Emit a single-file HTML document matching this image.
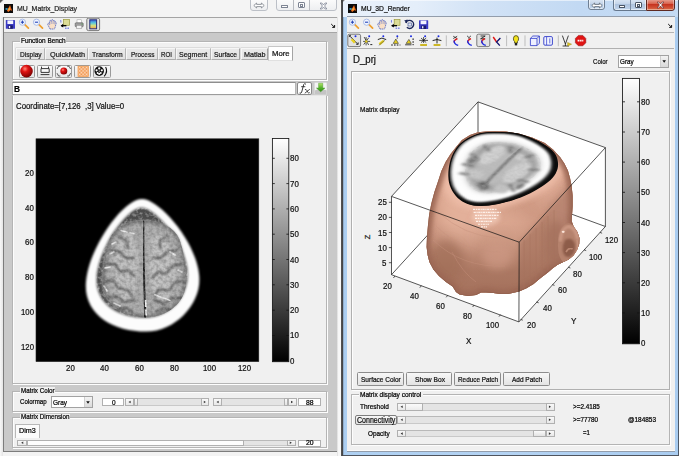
<!DOCTYPE html>
<html>
<head>
<meta charset="utf-8">
<title>MU</title>
<style>
*{box-sizing:border-box;margin:0;padding:0}
html,body{width:679px;height:456px;overflow:hidden;background:#f1f1f1}
body{position:relative;font-family:"Liberation Sans",sans-serif;color:#000;font-size:8px;line-height:1}
.a{position:absolute}
.t{position:absolute;white-space:nowrap;line-height:1;display:block;-webkit-text-stroke:0.22px currentColor}
#lw{left:0;top:0;width:341px;height:456px;background:linear-gradient(90deg,#f8f8f8,#e4e4e4 3px,#f3f3f3 3.2px);overflow:hidden}
#rw{left:341px;top:0;width:338px;height:456px;overflow:hidden}
.pn{position:absolute;background:#f0f0f0;border:1px solid #b4b4b4;box-shadow:inset 1px 1px 0 #fdfdfd,1px 1px 0 #fdfdfd}
.lb{position:absolute;background:#f0f0f0}
.tab{position:absolute;top:48px;height:12px;background:linear-gradient(#e9e9e9,#e2e2e2);border:1px solid #f6f6f6;border-right-color:#a2a2a2;border-bottom-color:#adadad;box-shadow:-0.5px -0.5px 0 #c9c9c9}
.ed{position:absolute;background:#fff;border:1px solid #a9a9a9}
.btn{position:absolute;background:linear-gradient(#f7f7f7,#e3e3e3);border:1px solid #8c8c8c;border-radius:1.5px}
.sl{position:absolute;background:#e4e4e4;border-top:1px solid #b9b9b9;border-bottom:1px solid #c9c9c9}
.sb{position:absolute;background:linear-gradient(#f9f9f9,#e8e8e8);border:1px solid #b0b0b0}
</style>
</head>
<body>
<div id="lw" class="a">
<div class="a" style="left:0;top:0;width:341px;height:17px;background:#f4f4f4"></div>
<div class="a" style="left:0;top:0;width:4px;height:3px;background:linear-gradient(135deg,#555 30%,#f4f4f4 60%)"></div>
<svg class="a" style="left:3.9px;top:3.8px" width="9.2" height="9" viewBox="0 0 10 10" preserveAspectRatio="none"><rect width="10" height="10" fill="#0a0a0a"/><path d="M0.6 5.6 L3.2 4.4 L4.6 5.6 L3.4 6.8 Z" fill="#3aa9d8"/><path d="M3.2 7.6 L5.4 3.4 L6.6 1.2 L7.6 4.2 L9.2 8.2 L7.6 6.6 L6.2 7.6 L4.8 9.0 Z" fill="#e8641a"/><path d="M6.6 1.2 L7.6 4.2 L9.2 8.2 L8.0 5.2Z" fill="#8c2a12"/><path d="M4.4 6.2 L6.0 3.2 L6.6 5.8 L5.4 7.8Z" fill="#f6b23a"/></svg>
<span class="t" id="tx0" style="left:17.20px;top:4px;font-size:7.80px;line-height:9px;color:#1c1c1c;transform-origin:0 0;transform:scaleX(0.8877)">MU_Matrix_Display</span>
<div class="a" style="left:250px;top:-2px;width:17.5px;height:12.5px;border:1px solid #bcc0c7;border-radius:0 0 3px 3px;background:linear-gradient(#fcfcfc,#eeeff1)"></div>
<svg class="a" style="left:253px;top:1.5px" width="12" height="7" viewBox="0 0 12 7"><path d="M0.8 3.5 L3.6 1 L3.6 2.4 L8.4 2.4 L8.4 1 L11.2 3.5 L8.4 6 L8.4 4.6 L3.6 4.6 L3.6 6 Z" fill="#fff" stroke="#7a7f88" stroke-width="0.8"/></svg>
<div class="a" style="left:275.5px;top:-2px;width:61px;height:13px;border:1px solid #bcc0c7;border-radius:0 0 3px 3px;background:linear-gradient(#fcfcfc,#eeeff1)"></div>
<div class="a" style="left:292.5px;top:0;width:1px;height:10.5px;background:#b7bac0"></div>
<div class="a" style="left:309px;top:0;width:1px;height:10.5px;background:#b7bac0"></div>
<div class="a" style="left:281px;top:5px;width:6.5px;height:3px;border:1px solid #7d8493;background:#fdfdfd;border-radius:.5px"></div>
<div class="a" style="left:297.5px;top:2px;width:7px;height:6px;border:1px solid #7d8493;background:#fdfdfd;border-radius:1px"></div>
<div class="a" style="left:299.5px;top:4px;width:3.5px;height:2.5px;border:.8px solid #7d8493;background:#fdfdfd"></div>
<svg class="a" style="left:319px;top:1.5px" width="9" height="8" viewBox="0 0 9 8"><path d="M1.2 1 L2.8 1 L4.5 3 L6.2 1 L7.8 1 L5.6 4 L7.8 7 L6.2 7 L4.5 5 L2.8 7 L1.2 7 L3.4 4 Z" fill="#fff" stroke="#7a8090" stroke-width="0.8"/></svg>
<div class="a" style="left:2.8px;top:16.6px;width:335.2px;height:435.8px;background:#7c7c7c"></div>
<div class="a" style="left:3.8px;top:17px;width:334.2px;height:1px;background:#a4a4a4"></div><div class="a" style="left:3.8px;top:17.6px;width:334.2px;height:14.4px;background:#f0f0f0"></div>
<div class="a" style="left:3.8px;top:32px;width:334.2px;height:1px;background:#a6a6a6"></div>
<div class="a" style="left:3.8px;top:33px;width:333.2px;height:418.4px;background:#c9c9c9"></div><div class="a" style="left:337px;top:17px;width:4px;height:439px;background:linear-gradient(90deg,#d9d9d9,#f6f6f6 1.4px,#f8f8f8)"></div>

<svg class="a" style="left:4px;top:18px" width="333" height="14" viewBox="4 18 333 14">
<g transform="translate(5.8,20)"><rect x="0" y="0" width="9.2" height="8.8" rx="0.6" fill="#3c3cc4"/><rect x="1.6" y="0.4" width="5.8" height="3.6" fill="#f4f4ff"/><rect x="2.2" y="5.4" width="4.8" height="3.4" fill="#1a1a6a"/><rect x="3" y="6" width="1.4" height="2.2" fill="#e8e8ff"/></g>
<line x1="24.599999999999998" y1="24.4" x2="28.4" y2="28.2" stroke="#eda030" stroke-width="1.7" stroke-linecap="round"/><circle cx="22.4" cy="22.2" r="3.1" fill="#f1f6ff" stroke="#a3b6e4" stroke-width="0.9"/><line x1="20.799999999999997" y1="22.2" x2="24.0" y2="22.2" stroke="#2343b8" stroke-width="1.1"/><line x1="22.4" y1="20.599999999999998" x2="22.4" y2="23.8" stroke="#2343b8" stroke-width="1.1"/>
<line x1="38.7" y1="24.4" x2="42.5" y2="28.2" stroke="#eda030" stroke-width="1.7" stroke-linecap="round"/><circle cx="36.5" cy="22.2" r="3.1" fill="#f1f6ff" stroke="#a3b6e4" stroke-width="0.9"/><line x1="34.9" y1="22.2" x2="38.1" y2="22.2" stroke="#2343b8" stroke-width="1.1"/>
<g transform="translate(47,19.4)"><path d="M3.0 9.6 Q1.8 7.4 0.9 5.4 Q0.3 4.0 1.2 3.9 Q2.0 3.9 2.6 5.0 L2.5 2.0 Q2.6 0.9 3.4 1.0 Q4.1 1.1 4.2 2.0 L4.4 1.0 Q4.6 0.1 5.4 0.2 Q6.1 0.3 6.1 1.2 L6.3 1.6 Q6.6 0.8 7.3 1.0 Q7.9 1.2 7.8 2.2 L7.9 2.9 Q8.3 2.3 8.9 2.6 Q9.4 2.9 9.2 3.8 L8.4 6.8 Q8.0 8.4 7.4 9.6 Z" fill="#fae0c6" stroke="#3f58c0" stroke-width="0.75" stroke-linejoin="round" stroke-dasharray="1.4 0.5"/><path d="M4.2 2.0 V4.6 M6.1 1.4 V4.6 M7.8 2.6 V5" stroke="#5a70c8" stroke-width="0.5"/></g>
<g transform="translate(60,19.6)"><rect x="3.6" y="-0.1" width="5.8" height="5.8" fill="#dcdc98" stroke="#9a9a3c" stroke-width="0.7"/><path d="M1.2 6.1 H6.4" stroke="#000" stroke-width="1.3"/><path d="M0.6 6.1 L3.2 4.2 V8 Z" fill="#000"/><path d="M0.3 1.2 L0.9 0.8 V3" stroke="#2a3ad8" stroke-width="0.6" fill="none"/><path d="M5 8.6 H9.6" stroke="#2a3ad8" stroke-width="0.8" stroke-dasharray="1.6 0.8"/></g>
<g transform="translate(75,19.8)"><rect x="2" y="0" width="4.6" height="3.4" fill="#fff" stroke="#999" stroke-width="0.5"/><rect x="0.2" y="3" width="8" height="4" rx="0.8" fill="#9f9f9f" stroke="#555" stroke-width="0.6"/><rect x="1.6" y="5.6" width="5.2" height="3" fill="#f2f2f2" stroke="#888" stroke-width="0.5"/><circle cx="7" cy="4.2" r="0.5" fill="#3a3"/></g>
<rect x="86.8" y="18.2" width="12.8" height="12.4" rx="1.6" fill="#e3e3e3" stroke="#6e6e6e" stroke-width="0.9"/>
<defs><linearGradient id="jet" x1="0" y1="0" x2="0" y2="1"><stop offset="0" stop-color="#3a5ad8"/><stop offset="0.35" stop-color="#58c8e0"/><stop offset="0.65" stop-color="#d8e078"/><stop offset="1" stop-color="#f0a050"/></linearGradient></defs>
<rect x="89.8" y="19.8" width="6.8" height="9" fill="url(#jet)" stroke="#2a2f7a" stroke-width="1"/>
<path d="M331.2 24 L334.4 27.2 M334.6 25 L334.6 27.4 L332.2 27.4" stroke="#111" stroke-width="1" fill="none"/>
</svg>
<div class="pn" style="left:12px;top:41px;width:315px;height:39px"></div>
<div class="lb" style="left:19.5px;top:37px;width:46.5px;height:8px"></div>
<span class="t" id="tx1" style="left:20.60px;top:37px;font-size:6.90px;line-height:7px;transform-origin:0 0;transform:scaleX(0.9313)">Function Bench</span>
<div class="tab" style="left:16px;width:29.0px"></div>
<span class="t" id="tx2" style="left:20.00px;top:50px;font-size:7.50px;line-height:9px;color:#1a1a1a;transform-origin:0 0;transform:scaleX(0.8783)">Display</span>
<div class="tab" style="left:45.4px;width:42.4px"></div>
<span class="t" id="tx3" style="left:49.60px;top:50px;font-size:7.50px;line-height:9px;color:#1a1a1a;transform-origin:0 0;transform:scaleX(0.9760)">QuickMath</span>
<div class="tab" style="left:88px;width:38.0px"></div>
<span class="t" id="tx4" style="left:92.00px;top:50px;font-size:7.50px;line-height:9px;color:#1a1a1a;transform-origin:0 0;transform:scaleX(0.9084)">Transform</span>
<div class="tab" style="left:126.4px;width:31.2px"></div>
<span class="t" id="tx5" style="left:130.60px;top:50px;font-size:7.50px;line-height:9px;color:#1a1a1a;transform-origin:0 0;transform:scaleX(0.8637)">Process</span>
<div class="tab" style="left:158px;width:17.6px"></div>
<span class="t" id="tx6" style="left:161.40px;top:50px;font-size:7.50px;line-height:9px;color:#1a1a1a;transform-origin:0 0;transform:scaleX(0.8244)">ROI</span>
<div class="tab" style="left:176px;width:34.6px"></div>
<span class="t" id="tx7" style="left:179.40px;top:50px;font-size:7.50px;line-height:9px;color:#1a1a1a;transform-origin:0 0;transform:scaleX(0.9390)">Segment</span>
<div class="tab" style="left:211px;width:29.4px"></div>
<span class="t" id="tx8" style="left:214.40px;top:50px;font-size:7.50px;line-height:9px;color:#1a1a1a;transform-origin:0 0;transform:scaleX(0.8894)">Surface</span>
<div class="tab" style="left:240.8px;width:27.0px"></div>
<span class="t" id="tx9" style="left:244.20px;top:50px;font-size:7.50px;line-height:9px;color:#1a1a1a;transform-origin:0 0;transform:scaleX(0.9593)">Matlab</span>
<div class="tab" style="left:268px;top:46px;width:24.8px;height:15px;background:#fff;border:1px solid #c6c6c6;border-right-color:#a4a4a4;border-bottom:1px solid #e0e0e0;box-shadow:none"></div>
<span class="t" id="tx10" style="left:271.80px;top:49px;font-size:7.60px;line-height:9px;color:#111;transform-origin:0 0;transform:scaleX(1.0166)">More</span>
<div class="btn" style="left:18.6px;top:64.8px;width:16.2px;height:12.8px;border-color:#9a9a9a;background:linear-gradient(#f9f9f9,#e6e6e6)"></div>
<div class="btn" style="left:36.9px;top:64.8px;width:16.2px;height:12.8px;border-color:#9a9a9a;background:linear-gradient(#f9f9f9,#e6e6e6)"></div>
<div class="btn" style="left:55.2px;top:64.8px;width:16.8px;height:12.8px;border-color:#9a9a9a;background:linear-gradient(#f9f9f9,#e6e6e6)"></div>
<div class="btn" style="left:74.0px;top:64.8px;width:16.7px;height:12.8px;border-color:#9a9a9a;background:linear-gradient(#f9f9f9,#e6e6e6)"></div>
<div class="btn" style="left:92.7px;top:64.8px;width:17.9px;height:12.8px;border-color:#9a9a9a;background:linear-gradient(#f9f9f9,#e6e6e6)"></div>
<svg class="a" style="left:16px;top:63px" width="100" height="17" viewBox="16 63 100 17"><defs><radialGradient id="rb" cx="0.38" cy="0.32" r="0.7"><stop offset="0" stop-color="#ff8a7a"/><stop offset="0.35" stop-color="#e01212"/><stop offset="1" stop-color="#7a0000"/></radialGradient><pattern id="dots" width="1.4" height="1.4" patternUnits="userSpaceOnUse"><rect width="1.4" height="1.4" fill="#fde1c6"/><rect width="0.7" height="0.7" fill="#f08a3c"/><rect x="0.7" y="0.7" width="0.7" height="0.7" fill="#f08a3c"/></pattern></defs>
<circle cx="26.5" cy="71.1" r="6.3" fill="url(#rb)"/>
<path d="M41.5 68.4 V66.6 M48.5 68.4 V66.6 M41 68.6 H49.2 V72.4 H41 Z M40.6 74.6 H49.4" stroke="#222" stroke-width="0.9" fill="#fafafa"/>
<circle cx="63.8" cy="71.1" r="3.5" fill="url(#rb)"/><path d="M60.4 66.2 H58.6 L57 69 M60.4 76 H58.6 L57 73.2 M67.2 66.2 H69 L70.6 69 M67.2 76 H69 L70.6 73.2" stroke="#333" stroke-width="0.8" fill="none"/>
<rect x="78" y="66.2" width="10.4" height="10.2" fill="url(#dots)" stroke="#f29a4c" stroke-width="0.7"/>
<circle cx="99.2" cy="71.1" r="4.8" fill="#111"/><circle cx="99.2" cy="68.4" r="1.15" fill="#fff"/><circle cx="99.2" cy="73.8" r="1.15" fill="#fff"/><circle cx="96.6" cy="70.3" r="1.1" fill="#fff"/><circle cx="101.8" cy="70.3" r="1.1" fill="#fff"/><circle cx="97.6" cy="73" r="0.9" fill="#fff"/><circle cx="100.8" cy="73" r="0.9" fill="#fff"/><circle cx="99.2" cy="71.1" r="0.6" fill="#fff"/><path d="M105.6 67 Q108.2 71.4 104.2 76.4" stroke="#111" stroke-width="1.1" fill="none"/>
</svg>
<div class="ed" style="left:12px;top:82.4px;width:284px;height:12.6px;border-color:#b5b5b5;border-top-color:#8e8e8e;border-bottom-color:#9c9c9c"></div>
<span class="t" id="tx11" style="left:14.40px;top:84px;font-size:8.80px;line-height:10px;font-weight:bold;transform-origin:0 0;transform:scaleX(0.9435)">B</span>
<div class="btn" style="left:297.4px;top:82.4px;width:14.6px;height:12.4px;background:#fff;border-color:#8a8a8a;border-radius:2px"></div>
<svg class="a" style="left:297px;top:82px" width="16" height="13" viewBox="297 82 16 13"><g fill="none" stroke="#141414" stroke-linecap="round"><path d="M305.6 84 Q304.5 82.8 303.7 84.6 L301.7 92 Q301.1 93.9 299.9 93.2" stroke-width="0.85"/><path d="M301.5 86.7 H304.9" stroke-width="0.75"/><path d="M305.3 89.5 Q306.3 89.1 306.7 90.2 L307.9 92.5 Q308.4 93.4 309.4 92.8 M309.5 89.5 L305.1 93" stroke-width="0.75"/></g></svg>
<svg class="a" style="left:313.6px;top:82px" width="13.4" height="13" viewBox="0 0 13.4 13"><defs><linearGradient id="garr" x1="0" y1="0" x2="0" y2="1"><stop offset="0" stop-color="#b4e66a"/><stop offset="0.55" stop-color="#52b02a"/><stop offset="1" stop-color="#2f8a14"/></linearGradient></defs><rect x="0.4" y="0.4" width="12.6" height="12.2" rx="1.2" fill="#f4f4f4" stroke="#d4d4d4" stroke-width="0.6"/><path d="M0.8 8.6 L3.4 7.4 L10 7.4 L12.6 8.6 L12.6 12.4 L0.8 12.4 Z" fill="#c4c4c4"/><path d="M4.6 1.2 H8.8 V6 H11 L6.7 9.8 L2.4 6 H4.6 Z" fill="url(#garr)" stroke="#3d8f1f" stroke-width="0.4"/></svg>
<div class="pn" style="left:12px;top:95px;width:315px;height:288.6px;border-color:#b4b4b4;border-top-color:#e6e6e6;box-shadow:inset 1px 0 0 #fdfdfd,1px 1px 0 #fdfdfd"></div>
<span class="t" id="tx12" style="left:16.40px;top:101px;font-size:8.50px;line-height:10px;color:#111;transform-origin:0 0;transform:scaleX(0.9207)">Coordinate=[7,126&nbsp;&nbsp;,3] Value=0</span>
<svg class="a" style="left:30px;top:134px" width="270" height="236" viewBox="30 134 270 236">
<defs>
<filter id="bl1" x="-10%" y="-10%" width="120%" height="120%"><feGaussianBlur stdDeviation="1"/></filter>
<filter id="bl2" x="-20%" y="-20%" width="140%" height="140%"><feGaussianBlur stdDeviation="1.8"/></filter>
<filter id="bl3" x="-20%" y="-20%" width="140%" height="140%"><feGaussianBlur stdDeviation="3"/></filter>
<filter id="bl07" x="-10%" y="-10%" width="120%" height="120%"><feGaussianBlur stdDeviation="0.8"/></filter>
<filter id="bl05" x="-10%" y="-10%" width="120%" height="120%"><feGaussianBlur stdDeviation="0.55"/></filter>
<filter id="noiseL" x="0" y="0" width="100%" height="100%"><feTurbulence type="fractalNoise" baseFrequency="0.33" numOctaves="2" seed="11"/><feColorMatrix values="0 0 0 0 0.5  0 0 0 0 0.5  0 0 0 0 0.5  1.9 0 0 0 -0.62"/></filter>
<filter id="noiseD" x="0" y="0" width="100%" height="100%"><feTurbulence type="fractalNoise" baseFrequency="0.3" numOctaves="2" seed="3"/><feColorMatrix values="0 0 0 0 0.1  0 0 0 0 0.1  0 0 0 0 0.1  0 1.9 0 0 -0.7"/></filter>
<filter id="noiseW" x="0" y="0" width="100%" height="100%"><feTurbulence type="fractalNoise" baseFrequency="0.3" numOctaves="2" seed="5"/><feColorMatrix values="0 0 0 0 0.95  0 0 0 0 0.95  0 0 0 0 0.95  0 0 2.2 0 -0.95"/></filter>
<linearGradient id="gcb" x1="0" y1="1" x2="0" y2="0"><stop offset="0" stop-color="#000"/><stop offset="1" stop-color="#fff"/></linearGradient>
<clipPath id="brainclip"><path d="M143.5 220.6 C160 220.6 174 227 179.4 239 C184.4 253 186.4 268 186 283 C185.4 302 168 317.4 145.5 317.4 C122 317.4 102.4 302 102.4 283 C102.4 268 104.6 253 109.6 239 C115 227 128 220.6 143.5 220.6 Z"/></clipPath>
<clipPath id="eggclip"><path d="M142 199 C160 199 199.4 245 199.4 280 C199.4 305 175 331.6 146 331.6 C114 331.6 85.8 316 85.8 286 C85.8 252 122 199 142 199 Z"/></clipPath>
<clipPath id="skullclip"><path d="M 141.6 207.2 C 156.2 207.2 188.2 245.6 188.2 274.9 C 188.2 295.8 168.4 318.0 144.9 318.0 C 118.9 318.0 96.0 305.0 96.0 279.9 C 96.0 251.5 125.4 207.2 141.6 207.2 Z"/></clipPath>
</defs>
<rect x="36.0" y="138.8" width="222.8" height="222.8" fill="#000"/>
<g filter="url(#bl1)">
<path d="M142 199 C160 199 199.4 245 199.4 280 C199.4 305 175 331.6 146 331.6 C114 331.6 85.8 316 85.8 286 C85.8 252 122 199 142 199 Z" fill="#fcfcfc"/>
<path d="M 141.6 207.2 C 156.2 207.2 188.2 245.6 188.2 274.9 C 188.2 295.8 168.4 318.0 144.9 318.0 C 118.9 318.0 96.0 305.0 96.0 279.9 C 96.0 251.5 125.4 207.2 141.6 207.2 Z" fill="#4c4c4c"/>
</g>
<g clip-path="url(#eggclip)">
<g clip-path="url(#skullclip)"><rect x="90" y="200" width="110" height="130" filter="url(#noiseW)" opacity="0.5"/></g>
<path d="M143.5 220.6 C160 220.6 174 227 179.4 239 C184.4 253 186.4 268 186 283 C185.4 302 168 317.4 145.5 317.4 C122 317.4 102.4 302 102.4 283 C102.4 268 104.6 253 109.6 239 C115 227 128 220.6 143.5 220.6 Z" fill="#acacac" filter="url(#bl1)"/>
</g>
<g clip-path="url(#brainclip)">
<path d="M143.5 220.6 C160 220.6 174 227 179.4 239 C184.4 253 186.4 268 186 283 C185.4 302 168 317.4 145.5 317.4 C122 317.4 102.4 302 102.4 283 C102.4 268 104.6 253 109.6 239 C115 227 128 220.6 143.5 220.6 Z" fill="none" stroke="#6a6a6a" stroke-width="6" filter="url(#bl2)" opacity="0.75"/>
<g filter="url(#bl2)"><path d="M128 232 C136 236 139 252 138 270 C137 288 134 298 126 302 C116 298 112 286 113 270 C114 252 120 236 128 232 Z" fill="#c2c2c2"/><path d="M158 232 C150 236 148 252 149 270 C150 288 154 298 163 302 C172 298 176 286 175 270 C174 252 166 236 158 232 Z" fill="#c4c4c4"/></g>
<g stroke="#484848" stroke-width="1.9" fill="none" filter="url(#bl07)" stroke-linecap="round" stroke-linejoin="round">
<path d="M118 236 L126 240 L128 248 M110 250 L120 252 L126 258 L134 258 M106 264 L115 264 L120 272 L128 270 L134 276 M104 282 L113 280 L118 288 L128 290 L132 296 M108 298 L117 296 L124 302 L134 300 M116 310 L126 308 L133 312"/>
<path d="M168 236 L160 240 L160 248 M177 250 L167 252 L161 258 L152 258 M182 264 L172 266 L166 274 L158 272 L152 278 M184 282 L175 282 L170 290 L158 290 L155 296 M182 298 L172 298 L164 304 L154 300 M174 310 L164 308 L156 312"/>
</g>
<g stroke="#f0f0f0" stroke-width="1.5" fill="none" filter="url(#bl05)" stroke-linecap="round">
<path d="M121 230.6 L127 232 M130 232.6 L134 233.4 M105 268 L110 267 M110 254 L114 252 M154.7 294.7 L170 300.4 M170 252 L175 255 M178 270 L182 272 M114 303 L120 306 M104 286 L107 291 M112 244 L116 242"/>
</g>
<path d="M143.4 214 L143.4 250 L144.4 290 L145.2 318" stroke="#141414" stroke-width="2" fill="none" filter="url(#bl05)"/>
<path d="M145.2 300 L145.8 307 M146.2 309.5 L146.6 315.5" stroke="#f6f6f6" stroke-width="2.4" fill="none" filter="url(#bl05)"/>
<rect x="90" y="200" width="110" height="130" filter="url(#noiseL)" opacity="0.5"/>
<rect x="90" y="200" width="110" height="130" filter="url(#noiseD)" opacity="0.45"/>
</g>
<path d="M143.4 209 L143.4 226" stroke="#2c2c2c" stroke-width="2.6" fill="none" filter="url(#bl1)"/>
<rect x="36.0" y="138.8" width="222.8" height="222.8" fill="none" stroke="#222" stroke-width="0.6"/>
<rect x="272.4" y="138.5" width="16.4" height="223.20000000000002" fill="url(#gcb)" stroke="#161616" stroke-width="0.85"/>
<path d="M286.4 335.5 H288.8 M272.4 335.5 H274.8" stroke="#111" stroke-width="0.8"/>
<path d="M286.4 310.2 H288.8 M272.4 310.2 H274.8" stroke="#111" stroke-width="0.8"/>
<path d="M286.4 284.8 H288.8 M272.4 284.8 H274.8" stroke="#111" stroke-width="0.8"/>
<path d="M286.4 259.5 H288.8 M272.4 259.5 H274.8" stroke="#111" stroke-width="0.8"/>
<path d="M286.4 234.2 H288.8 M272.4 234.2 H274.8" stroke="#111" stroke-width="0.8"/>
<path d="M286.4 208.9 H288.8 M272.4 208.9 H274.8" stroke="#111" stroke-width="0.8"/>
<path d="M286.4 183.6 H288.8 M272.4 183.6 H274.8" stroke="#111" stroke-width="0.8"/>
<path d="M286.4 158.3 H288.8 M272.4 158.3 H274.8" stroke="#111" stroke-width="0.8"/>
</svg>
<span class="t" id="tx13" style="left:65.54px;top:363px;font-size:8.40px;line-height:10px;color:#111;transform-origin:0 0;transform:scaleX(0.9434)">20</span>
<span class="t" id="tx14" style="left:25.00px;top:168px;font-size:8.40px;line-height:10px;color:#111;transform-origin:0 0;transform:scaleX(0.9434)">20</span>
<span class="t" id="tx15" style="left:100.35px;top:363px;font-size:8.40px;line-height:10px;color:#111;transform-origin:0 0;transform:scaleX(0.9434)">40</span>
<span class="t" id="tx16" style="left:25.00px;top:203px;font-size:8.40px;line-height:10px;color:#111;transform-origin:0 0;transform:scaleX(0.9434)">40</span>
<span class="t" id="tx17" style="left:135.17px;top:363px;font-size:8.40px;line-height:10px;color:#111;transform-origin:0 0;transform:scaleX(0.9434)">60</span>
<span class="t" id="tx18" style="left:25.00px;top:237px;font-size:8.40px;line-height:10px;color:#111;transform-origin:0 0;transform:scaleX(0.9434)">60</span>
<span class="t" id="tx19" style="left:169.98px;top:363px;font-size:8.40px;line-height:10px;color:#111;transform-origin:0 0;transform:scaleX(0.9434)">80</span>
<span class="t" id="tx20" style="left:25.00px;top:272px;font-size:8.40px;line-height:10px;color:#111;transform-origin:0 0;transform:scaleX(0.9434)">80</span>
<span class="t" id="tx21" style="left:202.69px;top:363px;font-size:8.40px;line-height:10px;color:#111;transform-origin:0 0;transform:scaleX(0.9296)">100</span>
<span class="t" id="tx22" style="left:20.80px;top:307px;font-size:8.40px;line-height:10px;color:#111;transform-origin:0 0;transform:scaleX(0.9296)">100</span>
<span class="t" id="tx23" style="left:237.50px;top:363px;font-size:8.40px;line-height:10px;color:#111;transform-origin:0 0;transform:scaleX(0.9296)">120</span>
<span class="t" id="tx24" style="left:20.80px;top:342px;font-size:8.40px;line-height:10px;color:#111;transform-origin:0 0;transform:scaleX(0.9296)">120</span>
<span class="t" id="tx25" style="left:289.80px;top:356px;font-size:8.40px;line-height:10px;color:#111;transform-origin:0 0;transform:scaleX(0.9418)">0</span>
<span class="t" id="tx26" style="left:289.80px;top:330px;font-size:8.40px;line-height:10px;color:#111;transform-origin:0 0;transform:scaleX(0.9434)">10</span>
<span class="t" id="tx27" style="left:289.80px;top:305px;font-size:8.40px;line-height:10px;color:#111;transform-origin:0 0;transform:scaleX(0.9434)">20</span>
<span class="t" id="tx28" style="left:289.80px;top:280px;font-size:8.40px;line-height:10px;color:#111;transform-origin:0 0;transform:scaleX(0.9434)">30</span>
<span class="t" id="tx29" style="left:289.80px;top:255px;font-size:8.40px;line-height:10px;color:#111;transform-origin:0 0;transform:scaleX(0.9434)">40</span>
<span class="t" id="tx30" style="left:289.80px;top:229px;font-size:8.40px;line-height:10px;color:#111;transform-origin:0 0;transform:scaleX(0.9434)">50</span>
<span class="t" id="tx31" style="left:289.80px;top:204px;font-size:8.40px;line-height:10px;color:#111;transform-origin:0 0;transform:scaleX(0.9434)">60</span>
<span class="t" id="tx32" style="left:289.80px;top:179px;font-size:8.40px;line-height:10px;color:#111;transform-origin:0 0;transform:scaleX(0.9434)">70</span>
<span class="t" id="tx33" style="left:289.80px;top:153px;font-size:8.40px;line-height:10px;color:#111;transform-origin:0 0;transform:scaleX(0.9434)">80</span>
<div class="pn" style="left:12px;top:391px;width:315px;height:20.6px"></div>
<div class="lb" style="left:19.6px;top:387px;width:35.6px;height:8px"></div>
<span class="t" id="tx34" style="left:20.60px;top:387px;font-size:6.90px;line-height:7px;transform-origin:0 0;transform:scaleX(0.9047)">Matrix Color</span>
<span class="t" id="tx35" style="left:20.00px;top:397px;font-size:7.20px;line-height:9px;transform-origin:0 0;transform:scaleX(0.8533)">Colormap</span>
<div class="ed" style="left:51.4px;top:395.6px;width:41.2px;height:12.8px;border-color:#a2a2a2"></div>
<span class="t" id="tx36" style="left:53.40px;top:398px;font-size:7.40px;line-height:9px;transform-origin:0 0;transform:scaleX(0.8741)">Gray</span>
<div class="a" style="left:84px;top:396.6px;width:7.6px;height:10.8px;background:linear-gradient(#f3f3f3,#dadada);border-left:1px solid #cfcfcf"></div>
<svg class="a" style="left:84px;top:396.6px" width="8" height="11" viewBox="0 0 8 11"><polygon points="2.2,4.32 5.8,4.32 4,6.840000000000001" fill="#111"/></svg>
<div class="ed" style="left:102px;top:398.4px;width:22.2px;height:7.4px;border-color:#b0b0b0"></div>
<span class="t" id="tx37" style="left:111.60px;top:399px;font-size:6.60px;line-height:7px;transform-origin:0 0;transform:scaleX(0.9804)">0</span>
<div class="sl" style="left:125px;top:397.6px;width:84.4px;height:8px"></div><div class="sb" style="left:125px;top:397.6px;width:8.6px;height:8px"></div><div class="sb" style="left:200.8px;top:397.6px;width:8.6px;height:8px"></div><div class="sb" style="left:134.4px;top:397.6px;width:3.6px;height:8px;background:linear-gradient(#fafafa,#e2e2e2)"></div><svg class="a" style="left:125px;top:397.6px" width="84.4" height="8" viewBox="0 0 84.4 8"><polygon points="5.6,2.7 3.5199999999999996,4.0 5.6,5.3" fill="#333"/><polygon points="78.80000000000001,2.7 80.88000000000001,4.0 78.80000000000001,5.3" fill="#333"/></svg>
<div class="sl" style="left:213px;top:397.6px;width:83.6px;height:8px"></div><div class="sb" style="left:213px;top:397.6px;width:8.6px;height:8px"></div><div class="sb" style="left:288.0px;top:397.6px;width:8.6px;height:8px"></div><div class="sb" style="left:284.2px;top:397.6px;width:3.4px;height:8px;background:linear-gradient(#fafafa,#e2e2e2)"></div><svg class="a" style="left:213px;top:397.6px" width="83.6" height="8" viewBox="0 0 83.6 8"><polygon points="5.6,2.7 3.5199999999999996,4.0 5.6,5.3" fill="#333"/><polygon points="78.0,2.7 80.08,4.0 78.0,5.3" fill="#333"/></svg>
<div class="ed" style="left:298px;top:398.2px;width:23px;height:7.6px;border-color:#b0b0b0"></div>
<span class="t" id="tx38" style="left:305.60px;top:399px;font-size:6.60px;line-height:7px;transform-origin:0 0;transform:scaleX(1.0349)">88</span>
<div class="pn" style="left:12px;top:417px;width:315px;height:31px"></div>
<div class="lb" style="left:19.6px;top:413.6px;width:50.6px;height:8px"></div>
<span class="t" id="tx39" style="left:20.80px;top:413px;font-size:6.90px;line-height:7px;transform-origin:0 0;transform:scaleX(0.9092)">Matrix Dimension</span>
<div class="a" style="left:15.4px;top:424.4px;width:24.2px;height:14px;background:#fbfbfb;border:1px solid #b8b8b8;border-bottom:none"></div>
<span class="t" id="tx40" style="left:19.40px;top:426px;font-size:7.40px;line-height:9px;transform-origin:0 0;transform:scaleX(0.9739)">Dim3</span>
<div class="sl" style="left:17.4px;top:440px;width:279px;height:5.6px"></div><div class="sb" style="left:17.4px;top:440px;width:9.6px;height:5.6px"></div><div class="sb" style="left:286.8px;top:440px;width:9.6px;height:5.6px"></div><div class="sb" style="left:27.4px;top:440px;width:217px;height:5.6px;background:#fdfdfd"></div><svg class="a" style="left:17.4px;top:440px" width="279" height="5.6" viewBox="0 0 279 5.6"><polygon points="6.1,1.4999999999999998 4.02,2.8 6.1,4.1" fill="#333"/><polygon points="272.9,1.4999999999999998 274.97999999999996,2.8 272.9,4.1" fill="#333"/></svg>
<div class="ed" style="left:298px;top:440px;width:23px;height:6.6px;border-color:#b0b0b0"></div>
<span class="t" id="tx41" style="left:305.60px;top:439px;font-size:6.40px;line-height:7px;transform-origin:0 0;transform:scaleX(1.0690)">20</span>
</div>
<div id="rw" class="a">
<div class="a" style="left:-341px;top:0;width:679px;height:456px">
<div class="a" style="left:341px;top:0;width:338px;height:456px;background:linear-gradient(90deg,#6a6a6a 0,#3e3e3e 0.9px,#4a4c50 1.9px,#9fc0e2 2.6px,#aacdf1 3.2px,#aed0f2 6px,#b4d3f3 50%,#a9ccf0 100%)"></div>
<div class="a" style="left:343px;top:0;width:336px;height:17px;background:linear-gradient(90deg,#e9f1fb 0,#e4eefa 22%,#d3e3f6 40%,#c2d9f3 70%,#c4dbf4 100%)"></div>
<div class="a" style="left:343px;top:0;width:336px;height:1px;background:rgba(255,255,255,.55)"></div>
<div class="a" style="left:677.8px;top:0;width:1.2px;height:456px;background:#4d5866"></div>
<div class="a" style="left:342.6px;top:454.8px;width:336.4px;height:1.2px;background:#50555e"></div>
<div class="a" style="left:341px;top:0;width:4px;height:3px;background:linear-gradient(135deg,#444 35%,rgba(0,0,0,0) 65%)"></div>
<div class="a" style="left:346.6px;top:16.4px;width:328.6px;height:435.4px;background:#939dab"></div>
<div class="a" style="left:347.4px;top:17.2px;width:327.4px;height:433.8px;background:#f0f0f0"></div>
<div class="a" style="left:347.4px;top:450px;width:327.4px;height:1px;background:#fbfbfb"></div>
<svg class="a" style="left:347.6px;top:3.8px" width="9.2" height="9" viewBox="0 0 10 10" preserveAspectRatio="none"><rect width="10" height="10" fill="#0a0a0a"/><path d="M0.6 5.6 L3.2 4.4 L4.6 5.6 L3.4 6.8 Z" fill="#3aa9d8"/><path d="M3.2 7.6 L5.4 3.4 L6.6 1.2 L7.6 4.2 L9.2 8.2 L7.6 6.6 L6.2 7.6 L4.8 9.0 Z" fill="#e8641a"/><path d="M6.6 1.2 L7.6 4.2 L9.2 8.2 L8.0 5.2Z" fill="#8c2a12"/><path d="M4.4 6.2 L6.0 3.2 L6.6 5.8 L5.4 7.8Z" fill="#f6b23a"/></svg>
<span class="t" id="tx42" style="left:360.60px;top:4px;font-size:7.80px;line-height:9px;color:#0c0c0c;transform-origin:0 0;transform:scaleX(0.8661)">MU_3D_Render</span>
<div class="a" style="left:588.4px;top:-2px;width:17px;height:12.4px;border:1px solid #6f7f92;border-radius:0 0 3px 3px;background:linear-gradient(#dfe9f5 0,#c6d6ea 45%,#b1c6e0 50%,#c4d6ec 100%);box-shadow:inset 0 0 0 .8px rgba(255,255,255,.7)"></div>
<svg class="a" style="left:591px;top:1.5px" width="12" height="7" viewBox="0 0 12 7"><path d="M0.8 3.5 L3.6 1 L3.6 2.4 L8.4 2.4 L8.4 1 L11.2 3.5 L8.4 6 L8.4 4.6 L3.6 4.6 L3.6 6 Z" fill="#fff" stroke="#5a6470" stroke-width="0.8"/></svg>
<div class="a" style="left:613px;top:-2px;width:33.4px;height:13.2px;border:1px solid #66778c;border-right:none;border-radius:0 0 0 3px;background:linear-gradient(#dde8f5 0,#c4d5ea 45%,#aec3de 50%,#c2d5ec 100%);box-shadow:inset 0 0 0 .8px rgba(255,255,255,.7)"></div>
<div class="a" style="left:629.6px;top:0;width:1px;height:10.4px;background:#7b8ca3"></div>
<div class="a" style="left:646px;top:-2px;width:29.4px;height:13.2px;border:1px solid #5e2a22;border-radius:0 0 3px 0;background:linear-gradient(#e9a99c 0,#d8604a 45%,#c63420 50%,#d4573a 85%,#e08a60 100%);box-shadow:inset 0 0 0 .8px rgba(255,255,255,.45)"></div>
<div class="a" style="left:618.6px;top:5px;width:6.5px;height:3px;border:1px solid #4b5666;background:#fdfdfd;border-radius:.5px"></div>
<div class="a" style="left:634.8px;top:2px;width:7px;height:6px;border:1px solid #4b5666;background:#fdfdfd;border-radius:1px"></div>
<div class="a" style="left:636.8px;top:4px;width:3.5px;height:2.5px;border:.8px solid #4b5666;background:#d9e3f0"></div>
<svg class="a" style="left:656.4px;top:1.4px" width="9" height="8" viewBox="0 0 9 8"><path d="M1.2 1 L2.8 1 L4.5 3 L6.2 1 L7.8 1 L5.6 4 L7.8 7 L6.2 7 L4.5 5 L2.8 7 L1.2 7 L3.4 4 Z" fill="#fff" stroke="#6a3030" stroke-width="0.7"/></svg>
<div class="a" style="left:347.4px;top:31.8px;width:326.6px;height:1px;background:#b4b4b4"></div>
<div class="a" style="left:347.4px;top:48.4px;width:326.6px;height:1px;background:#b0b0b0"></div>
<svg class="a" style="left:347px;top:17px" width="327" height="32" viewBox="347 17 327 32">
<line x1="354.59999999999997" y1="24.4" x2="358.4" y2="28.2" stroke="#eda030" stroke-width="1.7" stroke-linecap="round"/><circle cx="352.4" cy="22.2" r="3.1" fill="#f1f6ff" stroke="#a3b6e4" stroke-width="0.9"/><line x1="350.79999999999995" y1="22.2" x2="354.0" y2="22.2" stroke="#2343b8" stroke-width="1.1"/><line x1="352.4" y1="20.599999999999998" x2="352.4" y2="23.8" stroke="#2343b8" stroke-width="1.1"/>
<line x1="368.8" y1="24.4" x2="372.6" y2="28.2" stroke="#eda030" stroke-width="1.7" stroke-linecap="round"/><circle cx="366.6" cy="22.2" r="3.1" fill="#f1f6ff" stroke="#a3b6e4" stroke-width="0.9"/><line x1="365.0" y1="22.2" x2="368.20000000000005" y2="22.2" stroke="#2343b8" stroke-width="1.1"/>
<g transform="translate(377,19.4)"><path d="M3.0 9.6 Q1.8 7.4 0.9 5.4 Q0.3 4.0 1.2 3.9 Q2.0 3.9 2.6 5.0 L2.5 2.0 Q2.6 0.9 3.4 1.0 Q4.1 1.1 4.2 2.0 L4.4 1.0 Q4.6 0.1 5.4 0.2 Q6.1 0.3 6.1 1.2 L6.3 1.6 Q6.6 0.8 7.3 1.0 Q7.9 1.2 7.8 2.2 L7.9 2.9 Q8.3 2.3 8.9 2.6 Q9.4 2.9 9.2 3.8 L8.4 6.8 Q8.0 8.4 7.4 9.6 Z" fill="#fae0c6" stroke="#3f58c0" stroke-width="0.75" stroke-linejoin="round" stroke-dasharray="1.4 0.5"/><path d="M4.2 2.0 V4.6 M6.1 1.4 V4.6 M7.8 2.6 V5" stroke="#5a70c8" stroke-width="0.5"/></g>
<g transform="translate(390.6,19.6)"><rect x="3.6" y="-0.1" width="5.8" height="5.8" fill="#dcdc98" stroke="#9a9a3c" stroke-width="0.7"/><path d="M1.2 6.1 H6.4" stroke="#000" stroke-width="1.3"/><path d="M0.6 6.1 L3.2 4.2 V8 Z" fill="#000"/><path d="M0.3 1.2 L0.9 0.8 V3" stroke="#2a3ad8" stroke-width="0.6" fill="none"/><path d="M5 8.6 H9.6" stroke="#2a3ad8" stroke-width="0.8" stroke-dasharray="1.6 0.8"/></g>
<circle cx="409.6" cy="24.4" r="4" fill="none" stroke="#1a2458" stroke-width="1.5" stroke-dasharray="20 5.2" transform="rotate(200 409.6 24.4)"/><polygon points="404.2,20.4 407.6,19.4 406.6,23" fill="#1a2458"/><rect x="408" y="23" width="3.4" height="3" fill="#dfe6f4" stroke="#3a4a8a" stroke-width="0.6"/>
<g transform="translate(419,20.2)"><rect x="0" y="0" width="9.2" height="8.8" rx="0.6" fill="#3c3cc4"/><rect x="1.6" y="0.4" width="5.8" height="3.6" fill="#f4f4ff"/><rect x="2.2" y="5.4" width="4.8" height="3.4" fill="#1a1a6a"/><rect x="3" y="6" width="1.4" height="2.2" fill="#e8e8ff"/></g>
<path d="M668.2 24 L671.4 27.2 M671.6 25 L671.6 27.4 L669.2 27.4" stroke="#111" stroke-width="1" fill="none"/>
<rect x="347.8" y="34.2" width="12.8" height="12.4" rx="1.6" fill="#e2e2e2" stroke="#6e6e6e" stroke-width="0.9"/>
<circle cx="355.5" cy="36.2" r="1" fill="#1a2ae0"/><path d="M350 36.2 L357.6 44" stroke="#111" stroke-width="0.9"/><path d="M351.6 39.2 L354.8 42.6" stroke="#e8d020" stroke-width="2.4"/><path d="M356.2 44.4 h2 v-2" stroke="#111" stroke-width="0.8" fill="none"/><path d="M349.4 35.4 h1.6 M349.4 35.4 v1.6" stroke="#111" stroke-width="0.8"/>
<circle cx="369.2" cy="36.2" r="1" fill="#1a2ae0"/><path d="M364.09999999999997 37 L368.7 45 M363.09999999999997 41.4 H370.09999999999997 M366.09999999999997 37 V45.4 M368.7 37.8 L363.7 44.6" stroke="#111" stroke-width="0.7"/><circle cx="366.3" cy="41.4" r="1.2" fill="#e8d020"/><path d="M370.3 44.6 h2" stroke="#111" stroke-width="0.9"/>
<circle cx="383.3" cy="36.2" r="1" fill="#1a2ae0"/><path d="M377.8 39.6 Q381.8 36.6 386.2 39.6" stroke="#111" stroke-width="0.9" fill="none"/><path d="M379.40000000000003 44.2 L383.8 40.6" stroke="#e8d020" stroke-width="2.4"/><path d="M378.8 45.4 L384.8 40.2" stroke="#444" stroke-width="0.6"/>
<circle cx="397.3" cy="36.2" r="1" fill="#1a2ae0"/><path d="M393.2 43.4 L395.8 39 L398.40000000000003 43.4 Z" fill="#e8d020" stroke="#333" stroke-width="0.6"/><path d="M391.2 45 H400.40000000000003" stroke="#111" stroke-width="1" stroke-dasharray="1.6 1.2"/><path d="M397.3 37.4 v1.4" stroke="#111" stroke-width="0.6"/>
<circle cx="411.0" cy="36.2" r="1" fill="#1a2ae0"/><path d="M406.1 43.4 L408.9 39.4 L411.3 43.4 Z" fill="#e8d020" stroke="#333" stroke-width="0.6"/><path d="M413.1 38.4 V45.2" stroke="#111" stroke-width="1" stroke-dasharray="1.6 1.2"/><path d="M405.1 44.8 H411.5" stroke="#111" stroke-width="0.8"/>
<circle cx="425.1" cy="36.2" r="1" fill="#1a2ae0"/><path d="M419.20000000000005 40.4 H428.0 M423.6 37 V43 M421.0 38 L426.20000000000005 42.6 M426.20000000000005 38 L421.0 42.6" stroke="#111" stroke-width="0.7"/><path d="M420.20000000000005 45 H427.0" stroke="#c8b010" stroke-width="1.8"/>
<circle cx="438.5" cy="36.2" r="1" fill="#1a2ae0"/><path d="M432.6 40.6 Q437 38.4 441.4 40.6 M437 37.6 V43.4" stroke="#111" stroke-width="0.9" fill="none"/><path d="M433.6 45 H440.4" stroke="#c8b010" stroke-width="1.8"/>
<path d="M446.3 35.4 V46.2 M506.6 35.4 V46.2 M525 35.4 V46.2 M558.3 35.4 V46.2" stroke="#bdbdbd" stroke-width="1"/>
<rect x="476.8" y="34.2" width="13" height="12.4" rx="1.6" fill="#e2e2e2" stroke="#6e6e6e" stroke-width="0.9"/>
<path d="M453.20000000000005 36.2 L457.20000000000005 38.6 M457.20000000000005 36.2 L453.20000000000005 38.6" stroke="#111" stroke-width="0.7"/><path d="M457.40000000000003 38.6 Q453.0 40.6 454.6 43" stroke="#e01818" stroke-width="1.3" fill="none"/><path d="M454.0 40.4 Q454.0 44 458.20000000000005 45.4" stroke="#1a2ae0" stroke-width="1.3" fill="none"/>
<path d="M467.0 35.8 L469.0 37.6 L471.0 35.8 M469.0 37.6 V39" stroke="#111" stroke-width="0.7" fill="none"/><path d="M471.0 38.6 Q466.59999999999997 40.6 468.2 43" stroke="#e01818" stroke-width="1.3" fill="none"/><path d="M467.59999999999997 40.4 Q467.59999999999997 44 471.8 45.4" stroke="#1a2ae0" stroke-width="1.3" fill="none"/>
<path d="M480.59999999999997 36 H485.2 L480.59999999999997 38.8 H485.2" stroke="#111" stroke-width="0.8" fill="none"/><path d="M485.0 38.6 Q480.59999999999997 40.6 482.2 43" stroke="#e01818" stroke-width="1.3" fill="none"/><path d="M481.59999999999997 40.4 Q481.59999999999997 44 485.8 45.4" stroke="#1a2ae0" stroke-width="1.3" fill="none"/>
<path d="M493.2 37 L496.6 42" stroke="#e01818" stroke-width="1.4"/><path d="M500.4 38 L496.6 42 L499.8 45.6" stroke="#10106a" stroke-width="1.3" fill="none"/>
<path d="M513.4 38.8 Q513.4 35.6 516 35.6 Q518.6 35.6 518.6 38.8 Q518.6 40.6 517.4 41.6 V43 H514.6 V41.6 Q513.4 40.6 513.4 38.8 Z" fill="#f2e21c" stroke="#2a2a10" stroke-width="0.7"/><rect x="514.8" y="43" width="2.4" height="2.4" fill="#222"/>
<path d="M530.4 38.4 H537 V45.6 H530.4 Z M530.4 38.4 L532.8 36 H539.4 L537 38.4 M539.4 36 V43.2 L537 45.6" fill="#eef0ff" stroke="#2a36c8" stroke-width="0.8"/>
<rect x="543.8" y="36.6" width="8.6" height="8.6" rx="1.2" fill="#f2f4ff" stroke="#2a36c8" stroke-width="0.9"/><path d="M546.6 36.8 V45 M549.8 38.4 V43.4" stroke="#2a36c8" stroke-width="0.7"/>
<path d="M562.4 35.6 L565.4 44 L568.4 35.6 M565.4 44 V46 M562.6 46 H569" stroke="#111" stroke-width="0.8" fill="none"/><path d="M567.6 42.4 L571.6 44.2 L567.6 46 Z" fill="#e2c81c" stroke="#8a7a10" stroke-width="0.4"/>
<polygon points="578.4,35.4 582.8,35.4 585.8,38.4 585.8,42.8 582.8,45.8 578.4,45.8 575.4,42.8 575.4,38.4" fill="#e01414" stroke="#8a0808" stroke-width="0.5"/><path d="M577.6 40.6 H583.6" stroke="#fff" stroke-width="1.8" stroke-dasharray="1.4 0.5"/>
</svg>
<span class="t" id="tx43" style="left:353.40px;top:54px;font-size:10.00px;line-height:11px;color:#111;transform-origin:0 0;transform:scaleX(0.9621)">D_prj</span>
<span class="t" id="tx44" style="left:592.80px;top:58px;font-size:6.90px;line-height:7px;color:#111;transform-origin:0 0;transform:scaleX(0.8865)">Color</span>
<div class="ed" style="left:618px;top:55.4px;width:51.4px;height:12.6px;border-color:#a2a2a2"></div>
<span class="t" id="tx45" style="left:620.40px;top:57px;font-size:7.20px;line-height:9px;transform-origin:0 0;transform:scaleX(0.8730)">Gray</span>
<div class="a" style="left:660.4px;top:56.4px;width:8px;height:10.6px;background:linear-gradient(#f3f3f3,#d8d8d8);border-left:1px solid #cfcfcf"></div>
<svg class="a" style="left:660.4px;top:56.4px" width="8" height="11" viewBox="0 0 8 11"><polygon points="2.4000000000000004,4.32 6.0,4.32 4.2,6.840000000000001" fill="#111"/></svg>
<div class="pn" style="left:351.4px;top:71px;width:319px;height:318.6px;border-color:#b0b0b0"></div>
<span class="t" id="tx46" style="left:360.00px;top:106px;font-size:6.90px;line-height:7px;color:#111;transform-origin:0 0;transform:scaleX(0.9401)">Matrix display</span>
<svg class="a" style="left:352px;top:72px" width="317" height="300" viewBox="352 72 317 300">
<defs>
<filter id="rb05" x="-10%" y="-10%" width="120%" height="120%"><feGaussianBlur stdDeviation="0.5"/></filter>
<filter id="rb15" x="-10%" y="-10%" width="120%" height="120%"><feGaussianBlur stdDeviation="1.7"/></filter>
<filter id="rb1" x="-10%" y="-10%" width="120%" height="120%"><feGaussianBlur stdDeviation="1"/></filter>
<filter id="rb2" x="-20%" y="-20%" width="140%" height="140%"><feGaussianBlur stdDeviation="2.2"/></filter>
<filter id="rb4" x="-20%" y="-20%" width="140%" height="140%"><feGaussianBlur stdDeviation="4.5"/></filter>
<filter id="rb7" x="-30%" y="-30%" width="160%" height="160%"><feGaussianBlur stdDeviation="8"/></filter>
<filter id="noiseS" x="0" y="0" width="100%" height="100%"><feTurbulence type="fractalNoise" baseFrequency="0.22" numOctaves="2" seed="4"/><feColorMatrix values="0 0 0 0 0.45  0 0 0 0 0.45  0 0 0 0 0.45  1.8 0 0 0 -0.6"/></filter>
<linearGradient id="lowdark" x1="0" y1="0" x2="0" y2="1"><stop offset="0" stop-color="#a87560" stop-opacity="0"/><stop offset="0.3" stop-color="#a87560" stop-opacity="0.35"/><stop offset="0.62" stop-color="#a6735e" stop-opacity="0.88"/><stop offset="1" stop-color="#a06d58" stop-opacity="0.95"/></linearGradient>
<linearGradient id="gcb2" x1="0" y1="1" x2="0" y2="0"><stop offset="0" stop-color="#000"/><stop offset="1" stop-color="#fff"/></linearGradient>
<clipPath id="headclip"><path d="M478 132.2 L470 135 L462 140 L456.7 146.3 L450.6 154 L445.7 161.7 L441.4 171 L438 181.4 L434.4 192 L431.4 203.3 L429.2 214 L428 225 L427 236 L426.6 247 L427.6 255 L429.4 262 L433.4 269.6 L439 276 L446 282 L452.6 286.6 L456 292 L459.6 294.6 L468 296 L476 295 L481 292.6 L486 292.4 L493.3 293 L500 294 L508 294 L519 291.6 L526.4 288.2 L533.5 284 L540 278.6 L547.8 272.4 L553 268 L558 264.6 L563.4 262 L568.6 259.6 L573.4 255.6 L577 250 L579.2 244 L579.4 238 L577.4 232 L573.6 226.4 L571.6 221 L572.6 206 L572.6 196 L571.6 185.8 L570 178 L567.9 170.4 L564.4 163.4 L560.2 157.3 L553 149.4 L544.8 143 L532 137.4 L518.5 133.4 L506 131.6 L495 131.2 L486 131.4 Z"/></clipPath>
<clipPath id="g1clip"><path d="M-41.3 37.7 C-38.6 33.0 -33.9 29.2 -29.6 25.8 C-25.2 22.4 -20.1 19.2 -15.2 17.4 C-10.3 15.7 -4.8 15.5 -0.1 15.3 C4.6 15.1 9.0 15.4 13.1 16.2 C17.3 17.1 21.2 18.2 24.7 20.4 C28.2 22.6 31.8 26.3 34.3 29.6 C36.8 32.8 38.6 36.1 39.9 40.1 C41.2 44.2 41.9 48.6 42.0 53.7 C42.1 58.7 41.4 64.7 40.3 70.4 C39.2 76.2 37.3 82.8 35.2 88.2 C33.1 93.6 30.5 98.5 27.6 102.8 C24.7 107.2 21.0 111.7 17.8 114.3 C14.6 116.9 11.8 118.0 8.4 118.6 C5.0 119.1 1.2 118.8 -2.8 117.5 C-6.7 116.2 -11.3 113.8 -15.3 110.8 C-19.2 107.8 -23.0 104.0 -26.5 99.6 C-30.1 95.2 -34.0 89.4 -36.7 84.3 C-39.5 79.2 -41.8 74.1 -43.3 69.1 C-44.7 64.0 -45.7 59.3 -45.4 54.0 C-45.1 48.8 -43.9 42.4 -41.3 37.7 Z"/></clipPath>
<clipPath id="sliceclip"><path d="M-54.0 28.4 C-50.6 22.2 -44.4 17.1 -38.6 12.7 C-32.9 8.2 -26.2 4.0 -19.7 1.7 C-13.3 -0.6 -6.1 -0.9 0.2 -1.2 C6.4 -1.4 12.2 -1.0 17.6 0.1 C23.1 1.2 28.2 2.7 32.8 5.6 C37.5 8.5 42.2 13.3 45.5 17.7 C48.9 22.0 51.2 26.3 52.9 31.6 C54.6 36.9 55.6 42.8 55.6 49.5 C55.7 56.1 54.9 63.9 53.4 71.5 C51.9 79.1 49.5 87.8 46.7 94.9 C43.9 102.0 40.6 108.5 36.7 114.2 C32.9 119.9 28.0 125.8 23.8 129.3 C19.5 132.8 15.9 134.2 11.4 135.0 C6.9 135.7 1.9 135.3 -3.3 133.6 C-8.5 131.9 -14.6 128.7 -19.8 124.7 C-25.0 120.8 -29.9 115.8 -34.6 110.0 C-39.3 104.2 -44.4 96.5 -48.1 89.8 C-51.8 83.1 -54.8 76.4 -56.7 69.7 C-58.6 63.1 -59.9 56.8 -59.5 49.9 C-59.1 43.0 -57.5 34.6 -54.0 28.4 Z"/></clipPath>
</defs>
<polygon points="391.5,196.4 478.0,101.9 605.4,147.6 605.4,226.5 518.9,321.9 391.5,274.7" fill="#fff"/>
<g stroke="#151515" stroke-width="0.72" fill="none">
<path d="M391.5 196.4 L478.0 101.9 L605.4 147.6 L605.4 226.5 M478.0 101.9 L478.0 179.9 M391.5 274.7 L478.0 179.9 L605.4 226.5"/>
<path d="M391.5 196.4 L391.5 274.7 L518.9 321.9 L605.4 226.5"/>
</g>
<path d="M478 132.2 L470 135 L462 140 L456.7 146.3 L450.6 154 L445.7 161.7 L441.4 171 L438 181.4 L434.4 192 L431.4 203.3 L429.2 214 L428 225 L427 236 L426.6 247 L427.6 255 L429.4 262 L433.4 269.6 L439 276 L446 282 L452.6 286.6 L456 292 L459.6 294.6 L468 296 L476 295 L481 292.6 L486 292.4 L493.3 293 L500 294 L508 294 L519 291.6 L526.4 288.2 L533.5 284 L540 278.6 L547.8 272.4 L553 268 L558 264.6 L563.4 262 L568.6 259.6 L573.4 255.6 L577 250 L579.2 244 L579.4 238 L577.4 232 L573.6 226.4 L571.6 221 L572.6 206 L572.6 196 L571.6 185.8 L570 178 L567.9 170.4 L564.4 163.4 L560.2 157.3 L553 149.4 L544.8 143 L532 137.4 L518.5 133.4 L506 131.6 L495 131.2 L486 131.4 Z" fill="#cf9a84"/>
<g clip-path="url(#headclip)">
<ellipse cx="468" cy="200" rx="30" ry="52" fill="#e3b09a" filter="url(#rb7)"/>
<ellipse cx="505" cy="238" rx="26" ry="30" fill="#dba791" filter="url(#rb7)" opacity="0.9"/>
<ellipse cx="548" cy="175" rx="22" ry="28" fill="#deaa94" filter="url(#rb7)" opacity="0.9"/>
<g transform="matrix(0.699 0.352 -0.5388 0.43 533 141)"><path d="M-55.4 27.4 C-51.8 21.0 -45.5 15.9 -39.6 11.3 C-33.7 6.7 -26.8 2.4 -20.2 0.0 C-13.6 -2.4 -6.2 -2.6 0.2 -2.9 C6.6 -3.2 12.5 -2.8 18.1 -1.6 C23.7 -0.4 28.9 1.0 33.7 4.0 C38.5 7.0 43.3 11.9 46.7 16.4 C50.1 20.8 52.6 25.3 54.3 30.7 C56.0 36.1 57.0 42.2 57.1 49.0 C57.2 55.8 56.3 63.8 54.8 71.6 C53.3 79.4 50.8 88.3 47.9 95.6 C45.0 102.9 41.6 109.5 37.7 115.4 C33.8 121.3 28.7 127.4 24.4 130.9 C20.1 134.4 16.3 136.0 11.7 136.7 C7.1 137.4 1.9 137.1 -3.4 135.3 C-8.7 133.6 -14.9 130.2 -20.3 126.2 C-25.7 122.2 -30.7 117.1 -35.5 111.1 C-40.3 105.1 -45.5 97.3 -49.3 90.4 C-53.1 83.5 -56.1 76.6 -58.1 69.8 C-60.1 63.0 -61.5 56.6 -61.0 49.5 C-60.5 42.4 -59.0 33.8 -55.4 27.4 Z" fill="none" stroke="#eebda8" stroke-width="16" filter="url(#rb4)" opacity="0.9"/></g>
<path d="M519.4 243 L575 182 L590 262 L519.4 302 Z" fill="#b27f6b" filter="url(#rb2)" opacity="0.92"/>
<path d="M548 206 L575 176 L582 262 L548 282 Z" fill="#bb8874" filter="url(#rb4)" opacity="0.7"/>
<rect x="420" y="222" width="170" height="80" fill="url(#lowdark)"/>
<ellipse cx="446" cy="262" rx="18" ry="22" fill="#a06e59" filter="url(#rb4)" opacity="0.7"/>
<ellipse cx="497" cy="256" rx="15" ry="13" fill="#cd9984" filter="url(#rb4)" opacity="0.7"/>
<path d="M478 132.2 L470 135 L462 140 L456.7 146.3 L450.6 154 L445.7 161.7 L441.4 171 L438 181.4 L434.4 192 L431.4 203.3 L429.2 214 L428 225 L427 236 L426.6 247 L427.6 255 L429.4 262 L433.4 269.6 L439 276 L446 282 L452.6 286.6 L456 292 L459.6 294.6 L468 296 L476 295 L481 292.6 L486 292.4 L493.3 293 L500 294 L508 294 L519 291.6 L526.4 288.2 L533.5 284 L540 278.6 L547.8 272.4 L553 268 L558 264.6 L563.4 262 L568.6 259.6 L573.4 255.6 L577 250 L579.2 244 L579.4 238 L577.4 232 L573.6 226.4 L571.6 221 L572.6 206 L572.6 196 L571.6 185.8 L570 178 L567.9 170.4 L564.4 163.4 L560.2 157.3 L553 149.4 L544.8 143 L532 137.4 L518.5 133.4 L506 131.6 L495 131.2 L486 131.4 Z" fill="none" stroke="#9c6854" stroke-width="9" filter="url(#rb2)" opacity="0.9"/>
<path d="M478 132.2 L470 135 L462 140 L456.7 146.3 L450.6 154 L445.7 161.7 L441.4 171 L438 181.4 L434.4 192 L431.4 203.3 L429.2 214 L428 225 L427 236 L426.6 247 L427.6 255 L429.4 262 L433.4 269.6 L439 276 L446 282 L452.6 286.6 L456 292 L459.6 294.6 L468 296 L476 295 L481 292.6 L486 292.4 L493.3 293 L500 294 L508 294 L519 291.6 L526.4 288.2 L533.5 284 L540 278.6 L547.8 272.4 L553 268 L558 264.6 L563.4 262 L568.6 259.6 L573.4 255.6 L577 250 L579.2 244 L579.4 238 L577.4 232 L573.6 226.4 L571.6 221 L572.6 206 L572.6 196 L571.6 185.8 L570 178 L567.9 170.4 L564.4 163.4 L560.2 157.3 L553 149.4 L544.8 143 L532 137.4 L518.5 133.4 L506 131.6 L495 131.2 L486 131.4 Z" fill="none" stroke="#8e5e4c" stroke-width="1.6" filter="url(#rb05)" opacity="0.7"/>
<g fill="none" stroke="#c6927d" stroke-width="0.8" opacity="0.55" filter="url(#rb05)"><path d="M436 226 Q462 252 500 252 M433 240 Q462 268 505 266 M438 212 Q464 236 498 238 M452 252 Q462 272 476 282"/></g>
<ellipse cx="486" cy="217" rx="14" ry="9" fill="#f3cbb9" filter="url(#rb2)" opacity="0.7"/>
<g filter="url(#rb05)" stroke="#fff3ec" stroke-width="1.15" opacity="0.95" stroke-dasharray="2.2 0.7 1.2 0.6"><path d="M473 209.4 H497 M473.6 212.4 H501 M475 215.4 H499 M475 218.4 H497 M476 221.4 H492 M478 224.2 H489 M481 226.8 H487"/></g>
<ellipse cx="556" cy="244" rx="12" ry="24" fill="#a3705b" filter="url(#rb4)" opacity="0.75"/>
<path d="M560 232 Q563 222.6 570 223.4 Q577 226 579.4 238 Q580.4 248 576.6 255.6 Q572 262.4 563.4 262.6 Q557.4 256 558 244 Q558.4 237 560 232 Z" fill="#b5826d" filter="url(#rb05)"/>
<path d="M560.4 240 Q561 229 568.6 226.4 Q575.6 227.6 577.4 238" stroke="#cd9a85" stroke-width="3" fill="none" filter="url(#rb1)" stroke-linecap="round"/>
<path d="M565 240 Q572 236 575 244 Q576 253 570 257 Q563.6 258 562.6 250 Q562.6 244 565 240 Z" fill="#8d5c4a" filter="url(#rb1)"/>
<path d="M566 252 Q569 247 572.6 249" stroke="#b98671" stroke-width="1.6" fill="none" filter="url(#rb05)"/>
<path d="M577 240 Q579 248 575 256" stroke="#c4917c" stroke-width="1.6" fill="none" filter="url(#rb05)"/>
<ellipse cx="563.2" cy="231.8" rx="1.5" ry="1.1" fill="#fbe4d8" filter="url(#rb05)"/>
<g stroke="#a87561" stroke-width="0.9" opacity="0.55" filter="url(#rb05)"><path d="M524 240 V288 M530 234 V284 M536 228 V280 M542 222 V274 M548 216 V270 M554 210 V264"/></g>
</g>
<g transform="matrix(0.699 0.352 -0.5388 0.43 533 141)">
<path d="M-55.4 27.4 C-51.8 21.0 -45.5 15.9 -39.6 11.3 C-33.7 6.7 -26.8 2.4 -20.2 0.0 C-13.6 -2.4 -6.2 -2.6 0.2 -2.9 C6.6 -3.2 12.5 -2.8 18.1 -1.6 C23.7 -0.4 28.9 1.0 33.7 4.0 C38.5 7.0 43.3 11.9 46.7 16.4 C50.1 20.8 52.6 25.3 54.3 30.7 C56.0 36.1 57.0 42.2 57.1 49.0 C57.2 55.8 56.3 63.8 54.8 71.6 C53.3 79.4 50.8 88.3 47.9 95.6 C45.0 102.9 41.6 109.5 37.7 115.4 C33.8 121.3 28.7 127.4 24.4 130.9 C20.1 134.4 16.3 136.0 11.7 136.7 C7.1 137.4 1.9 137.1 -3.4 135.3 C-8.7 133.6 -14.9 130.2 -20.3 126.2 C-25.7 122.2 -30.7 117.1 -35.5 111.1 C-40.3 105.1 -45.5 97.3 -49.3 90.4 C-53.1 83.5 -56.1 76.6 -58.1 69.8 C-60.1 63.0 -61.5 56.6 -61.0 49.5 C-60.5 42.4 -59.0 33.8 -55.4 27.4 Z" fill="#0c0c0c"/>
<path d="M-55.4 27.4 C-51.8 21.0 -45.5 15.9 -39.6 11.3 C-33.7 6.7 -26.8 2.4 -20.2 0.0 C-13.6 -2.4 -6.2 -2.6 0.2 -2.9 C6.6 -3.2 12.5 -2.8 18.1 -1.6 C23.7 -0.4 28.9 1.0 33.7 4.0 C38.5 7.0 43.3 11.9 46.7 16.4 C50.1 20.8 52.6 25.3 54.3 30.7 C56.0 36.1 57.0 42.2 57.1 49.0 C57.2 55.8 56.3 63.8 54.8 71.6 C53.3 79.4 50.8 88.3 47.9 95.6 C45.0 102.9 41.6 109.5 37.7 115.4 C33.8 121.3 28.7 127.4 24.4 130.9 C20.1 134.4 16.3 136.0 11.7 136.7 C7.1 137.4 1.9 137.1 -3.4 135.3 C-8.7 133.6 -14.9 130.2 -20.3 126.2 C-25.7 122.2 -30.7 117.1 -35.5 111.1 C-40.3 105.1 -45.5 97.3 -49.3 90.4 C-53.1 83.5 -56.1 76.6 -58.1 69.8 C-60.1 63.0 -61.5 56.6 -61.0 49.5 C-60.5 42.4 -59.0 33.8 -55.4 27.4 Z" fill="#0c0c0c" transform="translate(1.2 -0.8)"/>
<g clip-path="url(#sliceclip)">
<path d="M-54.0 28.4 C-50.6 22.2 -44.4 17.1 -38.6 12.7 C-32.9 8.2 -26.2 4.0 -19.7 1.7 C-13.3 -0.6 -6.1 -0.9 0.2 -1.2 C6.4 -1.4 12.2 -1.0 17.6 0.1 C23.1 1.2 28.2 2.7 32.8 5.6 C37.5 8.5 42.2 13.3 45.5 17.7 C48.9 22.0 51.2 26.3 52.9 31.6 C54.6 36.9 55.6 42.8 55.6 49.5 C55.7 56.1 54.9 63.9 53.4 71.5 C51.9 79.1 49.5 87.8 46.7 94.9 C43.9 102.0 40.6 108.5 36.7 114.2 C32.9 119.9 28.0 125.8 23.8 129.3 C19.5 132.8 15.9 134.2 11.4 135.0 C6.9 135.7 1.9 135.3 -3.3 133.6 C-8.5 131.9 -14.6 128.7 -19.8 124.7 C-25.0 120.8 -29.9 115.8 -34.6 110.0 C-39.3 104.2 -44.4 96.5 -48.1 89.8 C-51.8 83.1 -54.8 76.4 -56.7 69.7 C-58.6 63.1 -59.9 56.8 -59.5 49.9 C-59.1 43.0 -57.5 34.6 -54.0 28.4 Z" fill="#0e0e0e"/>
<path d="M-51.3 30.4 C-48.0 24.5 -42.1 19.7 -36.7 15.5 C-31.3 11.3 -24.9 7.2 -18.8 5.0 C-12.6 2.8 -5.8 2.6 0.1 2.3 C6.0 2.1 11.5 2.5 16.7 3.5 C21.8 4.6 26.7 5.9 31.1 8.7 C35.5 11.5 39.9 16.1 43.1 20.2 C46.3 24.3 48.5 28.4 50.2 33.4 C51.8 38.4 52.7 44.0 52.7 50.3 C52.8 56.7 52.0 64.1 50.6 71.3 C49.2 78.4 46.9 86.7 44.2 93.5 C41.6 100.2 38.4 106.3 34.8 111.8 C31.2 117.2 26.5 122.8 22.5 126.1 C18.5 129.4 15.0 130.8 10.7 131.5 C6.5 132.2 1.7 131.8 -3.2 130.2 C-8.2 128.6 -13.9 125.5 -18.9 121.8 C-23.8 118.0 -28.4 113.3 -32.9 107.8 C-37.4 102.3 -42.2 95.0 -45.7 88.6 C-49.2 82.3 -52.0 75.9 -53.8 69.6 C-55.6 63.3 -56.9 57.3 -56.5 50.8 C-56.1 44.3 -54.6 36.3 -51.3 30.4 Z" fill="#fdfdfd" filter="url(#rb15)" transform="translate(-2.0 -0.8)"/>
<g transform="translate(-0.7 63.25) scale(0.944) translate(1 -67)">
<path d="M-39.1 39.3 C-36.6 34.8 -32.1 31.2 -28.0 28.0 C-23.9 24.8 -19.1 21.8 -14.4 20.1 C-9.8 18.4 -4.6 18.3 -0.2 18.1 C4.3 17.9 8.5 18.2 12.4 19.0 C16.3 19.8 20.0 20.8 23.3 22.9 C26.6 25.0 30.0 28.5 32.4 31.6 C34.8 34.7 36.5 37.8 37.7 41.6 C38.9 45.4 39.6 49.6 39.7 54.4 C39.7 59.2 39.1 64.8 38.1 70.2 C37.0 75.7 35.2 81.9 33.2 87.0 C31.2 92.1 28.8 96.8 26.1 100.9 C23.3 105.0 19.8 109.2 16.8 111.7 C13.7 114.2 11.1 115.3 7.9 115.8 C4.6 116.3 1.1 116.0 -2.7 114.8 C-6.4 113.6 -10.8 111.3 -14.5 108.4 C-18.3 105.6 -21.8 102.0 -25.1 97.9 C-28.5 93.7 -32.2 88.2 -34.8 83.4 C-37.4 78.6 -39.6 73.7 -41.0 69.0 C-42.3 64.2 -43.3 59.7 -43.0 54.8 C-42.7 49.8 -41.6 43.7 -39.1 39.3 Z" fill="#939393" filter="url(#rb4)"/>
<path d="M-31.5 44.8 C-29.5 41.3 -25.9 38.4 -22.6 35.8 C-19.3 33.3 -15.5 30.8 -11.8 29.5 C-8.0 28.2 -3.9 28.0 -0.3 27.9 C3.2 27.7 6.6 27.9 9.7 28.6 C12.8 29.2 15.8 30.0 18.4 31.7 C21.1 33.4 23.8 36.2 25.7 38.7 C27.6 41.2 29.0 43.6 30.0 46.7 C30.9 49.7 31.5 53.1 31.5 56.9 C31.6 60.7 31.1 65.2 30.2 69.6 C29.4 73.9 28.0 78.9 26.4 83.0 C24.8 87.1 22.9 90.8 20.7 94.1 C18.5 97.4 15.7 100.8 13.2 102.8 C10.8 104.8 8.7 105.6 6.1 106.0 C3.5 106.4 0.6 106.2 -2.3 105.2 C-5.3 104.3 -8.8 102.4 -11.8 100.2 C-14.8 97.9 -17.6 95.0 -20.3 91.7 C-23.0 88.4 -25.9 84.0 -28.0 80.1 C-30.2 76.2 -31.9 72.4 -33.0 68.6 C-34.1 64.8 -34.9 61.2 -34.6 57.2 C-34.3 53.2 -33.5 48.4 -31.5 44.8 Z" fill="#bcbcbc" filter="url(#rb4)"/>
<g filter="url(#rb2)"><ellipse cx="-22" cy="52" rx="10" ry="22" fill="#d2d2d2"/><ellipse cx="22" cy="60" rx="11" ry="24" fill="#d0d0d0"/><ellipse cx="-16" cy="94" rx="11" ry="9" fill="#c8c8c8"/><ellipse cx="26" cy="96" rx="9" ry="9" fill="#c4c4c4"/><ellipse cx="8" cy="34" rx="8" ry="6" fill="#cfcfcf"/></g>
<g filter="url(#rb2)" stroke="#707070" stroke-width="4" fill="none" stroke-linecap="round"><path d="M-40 44 L-30 48 M-42 66 L-30 70 M-38 88 L-28 84 M38 40 L30 46 M42 66 L32 70 M40 90 L30 84 M-14 26 L-8 34 M16 22 L12 30 M-30 104 L-22 100 M8 112 L12 104"/></g>
<g filter="url(#rb2)"><ellipse cx="4" cy="104" rx="7" ry="6" fill="#666"/><ellipse cx="-34" cy="76" rx="5" ry="7" fill="#7a7a7a"/><ellipse cx="40" cy="78" rx="4" ry="8" fill="#7c7c7c"/></g>
<path d="M-3 21 C-2 40 2 70 3 86 L7 108" stroke="#626262" stroke-width="3.2" fill="none" filter="url(#rb15)" stroke-linecap="round"/>
<g clip-path="url(#g1clip)"><rect x="-60" y="0" width="120" height="140" filter="url(#noiseS)" opacity="0.5"/></g>
</g>
</g></g>
<path d="M391.5 196.4 L519.2 242.2 L605.4 147.6 M519.2 242.2 L518.9 321.9" stroke="#151515" stroke-width="0.72" fill="none"/>
<g stroke="#151515" stroke-width="0.7">
<path d="M391.5 202.3 h-2.6"/>
<path d="M391.5 217.4 h-2.6"/>
<path d="M391.5 232.5 h-2.6"/>
<path d="M391.5 247.6 h-2.6"/>
<path d="M391.5 262.7 h-2.6"/>
<path d="M395.0 276.0 l-1.6 2"/>
<path d="M421.4 285.7 l-1.6 2"/>
<path d="M447.8 295.3 l-1.6 2"/>
<path d="M474.2 305.0 l-1.6 2"/>
<path d="M500.6 314.6 l-1.6 2"/>
<path d="M520.6 319.4 l2.2 0.8"/>
<path d="M536.5 302.0 l2.2 0.8"/>
<path d="M552.3 284.6 l2.2 0.8"/>
<path d="M568.2 267.2 l2.2 0.8"/>
<path d="M584.0 249.8 l2.2 0.8"/>
<path d="M599.9 232.4 l2.2 0.8"/>
</g>
<rect x="622.5" y="78.39999999999999" width="17" height="265.4" fill="url(#gcb2)" stroke="#161616" stroke-width="0.85"/>
<path d="M637 312.9 h2.5 M622.5 312.9 h2.5" stroke="#111" stroke-width="0.8"/>
<path d="M637 282.8 h2.5 M622.5 282.8 h2.5" stroke="#111" stroke-width="0.8"/>
<path d="M637 252.6 h2.5 M622.5 252.6 h2.5" stroke="#111" stroke-width="0.8"/>
<path d="M637 222.5 h2.5 M622.5 222.5 h2.5" stroke="#111" stroke-width="0.8"/>
<path d="M637 192.3 h2.5 M622.5 192.3 h2.5" stroke="#111" stroke-width="0.8"/>
<path d="M637 162.1 h2.5 M622.5 162.1 h2.5" stroke="#111" stroke-width="0.8"/>
<path d="M637 132.0 h2.5 M622.5 132.0 h2.5" stroke="#111" stroke-width="0.8"/>
<path d="M637 101.8 h2.5 M622.5 101.8 h2.5" stroke="#111" stroke-width="0.8"/>
</svg>
<span class="t" id="tx47" style="left:640.80px;top:338px;font-size:8.40px;line-height:10px;color:#111;transform-origin:0 0;transform:scaleX(0.9418)">0</span>
<span class="t" id="tx48" style="left:640.80px;top:308px;font-size:8.40px;line-height:10px;color:#111;transform-origin:0 0;transform:scaleX(0.9434)">10</span>
<span class="t" id="tx49" style="left:640.80px;top:278px;font-size:8.40px;line-height:10px;color:#111;transform-origin:0 0;transform:scaleX(0.9434)">20</span>
<span class="t" id="tx50" style="left:640.80px;top:248px;font-size:8.40px;line-height:10px;color:#111;transform-origin:0 0;transform:scaleX(0.9434)">30</span>
<span class="t" id="tx51" style="left:640.80px;top:218px;font-size:8.40px;line-height:10px;color:#111;transform-origin:0 0;transform:scaleX(0.9434)">40</span>
<span class="t" id="tx52" style="left:640.80px;top:187px;font-size:8.40px;line-height:10px;color:#111;transform-origin:0 0;transform:scaleX(0.9434)">50</span>
<span class="t" id="tx53" style="left:640.80px;top:157px;font-size:8.40px;line-height:10px;color:#111;transform-origin:0 0;transform:scaleX(0.9434)">60</span>
<span class="t" id="tx54" style="left:640.80px;top:127px;font-size:8.40px;line-height:10px;color:#111;transform-origin:0 0;transform:scaleX(0.9434)">70</span>
<span class="t" id="tx55" style="left:640.80px;top:97px;font-size:8.40px;line-height:10px;color:#111;transform-origin:0 0;transform:scaleX(0.9434)">80</span>
<span class="t" id="tx56" style="left:378.00px;top:197px;font-size:8.40px;line-height:10px;color:#111;transform-origin:0 0;transform:scaleX(0.9434)">25</span>
<span class="t" id="tx57" style="left:378.00px;top:212px;font-size:8.40px;line-height:10px;color:#111;transform-origin:0 0;transform:scaleX(0.9434)">20</span>
<span class="t" id="tx58" style="left:378.00px;top:228px;font-size:8.40px;line-height:10px;color:#111;transform-origin:0 0;transform:scaleX(0.9434)">15</span>
<span class="t" id="tx59" style="left:378.00px;top:243px;font-size:8.40px;line-height:10px;color:#111;transform-origin:0 0;transform:scaleX(0.9434)">10</span>
<span class="t" id="tx60" style="left:382.40px;top:258px;font-size:8.40px;line-height:10px;color:#111;transform-origin:0 0;transform:scaleX(0.9418)">5</span>
<span class="t" id="tx61" style="left:383.40px;top:281px;font-size:8.40px;line-height:10px;color:#111;transform-origin:0 0;transform:scaleX(0.9434)">20</span>
<span class="t" id="tx62" style="left:409.80px;top:291px;font-size:8.40px;line-height:10px;color:#111;transform-origin:0 0;transform:scaleX(0.9434)">40</span>
<span class="t" id="tx63" style="left:436.20px;top:301px;font-size:8.40px;line-height:10px;color:#111;transform-origin:0 0;transform:scaleX(0.9434)">60</span>
<span class="t" id="tx64" style="left:463.00px;top:311px;font-size:8.40px;line-height:10px;color:#111;transform-origin:0 0;transform:scaleX(0.9434)">80</span>
<span class="t" id="tx65" style="left:486.10px;top:320px;font-size:8.40px;line-height:10px;color:#111;transform-origin:0 0;transform:scaleX(0.9296)">100</span>
<span class="t" id="tx66" style="left:527.20px;top:320px;font-size:8.40px;line-height:10px;color:#111;transform-origin:0 0;transform:scaleX(0.9434)">20</span>
<span class="t" id="tx67" style="left:542.80px;top:303px;font-size:8.40px;line-height:10px;color:#111;transform-origin:0 0;transform:scaleX(0.9434)">40</span>
<span class="t" id="tx68" style="left:558.00px;top:285px;font-size:8.40px;line-height:10px;color:#111;transform-origin:0 0;transform:scaleX(0.9434)">60</span>
<span class="t" id="tx69" style="left:573.40px;top:269px;font-size:8.40px;line-height:10px;color:#111;transform-origin:0 0;transform:scaleX(0.9434)">80</span>
<span class="t" id="tx70" style="left:589.10px;top:252px;font-size:8.40px;line-height:10px;color:#111;transform-origin:0 0;transform:scaleX(0.9296)">100</span>
<span class="t" id="tx71" style="left:604.70px;top:235px;font-size:8.40px;line-height:10px;color:#111;transform-origin:0 0;transform:scaleX(0.9296)">120</span>
<span class="t" id="tx72" style="left:466.40px;top:336px;font-size:8.40px;line-height:10px;color:#111;transform-origin:0 0;transform:scaleX(0.9654)">X</span>
<span class="t" id="tx73" style="left:570.80px;top:316px;font-size:8.40px;line-height:10px;color:#111;transform-origin:0 0;transform:scaleX(0.9654)">Y</span>
<span class="t" style="left:366.2px;top:232.6px;font-size:7.4px;line-height:8px;transform:rotate(-90deg);transform-origin:50% 50%;color:#111">Z</span>
<div class="btn" style="left:357.3px;top:372px;width:46.5px;height:13.6px"></div>
<span class="t" id="tx74" style="left:360.60px;top:376px;font-size:6.90px;line-height:7px;color:#111;transform-origin:0 0;transform:scaleX(0.9445)">Surface Color</span>
<div class="btn" style="left:406.2px;top:372px;width:46.2px;height:13.6px"></div>
<span class="t" id="tx75" style="left:414.80px;top:376px;font-size:6.90px;line-height:7px;color:#111;transform-origin:0 0;transform:scaleX(0.9668)">Show Box</span>
<div class="btn" style="left:454.4px;top:372px;width:47.0px;height:13.6px"></div>
<span class="t" id="tx76" style="left:458.40px;top:376px;font-size:6.90px;line-height:7px;color:#111;transform-origin:0 0;transform:scaleX(0.9239)">Reduce Patch</span>
<div class="btn" style="left:503.4px;top:372px;width:46.4px;height:13.6px"></div>
<span class="t" id="tx77" style="left:511.60px;top:376px;font-size:6.90px;line-height:7px;color:#111;transform-origin:0 0;transform:scaleX(0.9435)">Add Patch</span>
<div class="pn" style="left:351.4px;top:394.4px;width:319px;height:50.4px"></div>
<div class="lb" style="left:359px;top:390.6px;width:63.6px;height:8px"></div>
<span class="t" id="tx78" style="left:360.20px;top:391px;font-size:6.90px;line-height:7px;transform-origin:0 0;transform:scaleX(0.9456)">Matrix display control</span>
<span class="t" id="tx79" style="left:360.20px;top:403px;font-size:6.90px;line-height:7px;transform-origin:0 0;transform:scaleX(0.9394)">Threshold</span>
<div class="sl" style="left:397.2px;top:403px;width:157.6px;height:7.6px"></div><div class="sb" style="left:397.2px;top:403px;width:8.6px;height:7.6px"></div><div class="sb" style="left:546.2px;top:403px;width:8.6px;height:7.6px"></div><div class="sb" style="left:405.4px;top:403px;width:17.4px;height:7.6px;background:linear-gradient(#fbfbfb,#ececec)"></div><svg class="a" style="left:397.2px;top:403px" width="157.6" height="7.6" viewBox="0 0 157.6 7.6"><polygon points="5.6,2.5 3.5199999999999996,3.8 5.6,5.1" fill="#333"/><polygon points="151.99999999999997,2.5 154.07999999999998,3.8 151.99999999999997,5.1" fill="#333"/></svg>
<div class="btn" style="left:355.2px;top:414.6px;width:41.8px;height:10.8px;border-radius:2px;border-color:#7e7e7e"></div>
<span class="t" id="tx80" style="left:357.20px;top:415px;font-size:8.40px;line-height:10px;color:#111;transform-origin:0 0;transform:scaleX(0.8416)">Connectivity</span>
<div class="sl" style="left:397.2px;top:416.4px;width:157.6px;height:7.4px"></div><div class="sb" style="left:397.2px;top:416.4px;width:8.6px;height:7.4px"></div><div class="sb" style="left:546.2px;top:416.4px;width:8.6px;height:7.4px"></div><svg class="a" style="left:397.2px;top:416.4px" width="157.6" height="7.4" viewBox="0 0 157.6 7.4"><polygon points="5.6,2.4000000000000004 3.5199999999999996,3.7 5.6,5.0" fill="#333"/><polygon points="151.99999999999997,2.4000000000000004 154.07999999999998,3.7 151.99999999999997,5.0" fill="#333"/></svg>
<span class="t" id="tx81" style="left:368.20px;top:430px;font-size:6.90px;line-height:7px;transform-origin:0 0;transform:scaleX(0.9241)">Opacity</span>
<div class="sl" style="left:397.2px;top:429.6px;width:157.6px;height:7.2px"></div><div class="sb" style="left:397.2px;top:429.6px;width:8.6px;height:7.2px"></div><div class="sb" style="left:546.2px;top:429.6px;width:8.6px;height:7.2px"></div><div class="sb" style="left:533px;top:429.6px;width:13.4px;height:7.2px;background:linear-gradient(#fafafa,#e2e2e2)"></div><svg class="a" style="left:397.2px;top:429.6px" width="157.6" height="7.2" viewBox="0 0 157.6 7.2"><polygon points="5.6,2.3 3.5199999999999996,3.6 5.6,4.9" fill="#333"/><polygon points="151.99999999999997,2.3 154.07999999999998,3.6 151.99999999999997,4.9" fill="#333"/></svg>
<span class="t" id="tx82" style="left:572.80px;top:403px;font-size:6.80px;line-height:7px;transform-origin:0 0;transform:scaleX(0.9327)">&gt;=2.4185</span>
<span class="t" id="tx83" style="left:572.80px;top:416px;font-size:6.80px;line-height:7px;transform-origin:0 0;transform:scaleX(0.9313)">&gt;=77780</span>
<span class="t" id="tx84" style="left:627.80px;top:416px;font-size:6.80px;line-height:7px;transform-origin:0 0;transform:scaleX(0.9461)">@184853</span>
<span class="t" id="tx85" style="left:582.80px;top:429px;font-size:6.80px;line-height:7px;transform-origin:0 0;transform:scaleX(0.8774)">=1</span>
</div></div>
</body>
</html>
